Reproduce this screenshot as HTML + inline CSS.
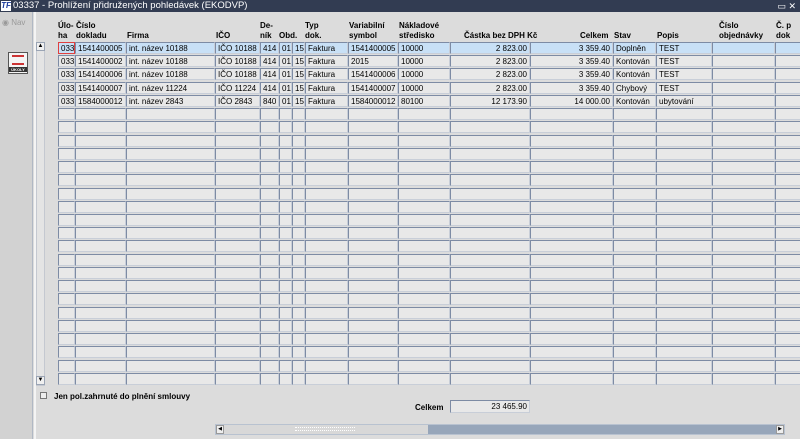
<!DOCTYPE html>
<html><head><meta charset="utf-8"><style>
*{margin:0;padding:0;box-sizing:border-box}
body{width:800px;height:439px;overflow:hidden;background:#dcdcdc;font-family:"Liberation Sans",Arial,sans-serif;font-size:8px;color:#000;position:relative}
.t{position:absolute;left:0;top:0;width:800px;height:12px;background:#323c52;color:#fff;font-size:9.5px;line-height:12px;padding-left:13px}
.t .ic{position:absolute;left:1px;top:1px;width:10px;height:10px;background:#fff;color:#1a3a9a;font-size:8px;font-weight:bold;line-height:10px;text-align:center;font-style:italic}
.lp{position:absolute;left:0;top:12px;width:33px;height:427px;background:#d2d2d2;border-right:1px solid #b0b8c4}
.wl{position:absolute;left:34px;top:12px;width:2px;height:427px;background:#f4f4f4}
.h{position:absolute;font-weight:bold;font-size:8px;line-height:10px;top:21px}
.c{position:absolute;height:12px;background:#e8e8e8;border:1px solid #7d8ba4;border-right-color:#c8ced8;border-bottom-color:#c8ced8;font-size:8px;line-height:11px;padding:0 2px;white-space:nowrap;overflow:hidden}
.s{background:#c8e0f6}
.r{text-align:right}
</style></head><body>
<div class="t"><div class="ic">TF</div>03337 - Prohlížení přidružených pohledávek (EKODVP)<span style="position:absolute;right:4px;top:0;font-size:9px">▭ ✕</span></div>
<div class="lp"><div style="position:absolute;left:2px;top:6px;color:#999;font-size:8px">◉ Nav</div>
<div style="position:absolute;left:8px;top:40px;width:20px;height:22px;background:#f4f4f4;border:1px solid #555"><div style="margin:2px 3px;height:10px;border-top:2px solid #c33;border-bottom:2px solid #c33"></div><div style="font-size:4px;font-weight:bold;text-align:center;background:#333;color:#fff">ÚKOLY</div></div></div>
<div class="wl"></div>
<div style="position:absolute;left:36px;top:42px;width:9px;height:344px;background:#e4e4e4;border:1px solid #c4c8d0"></div>
<div style="position:absolute;left:36px;top:42px;width:9px;height:9px;border:1px solid #9aa4b4;background:#f0f0f0;font-size:6px;text-align:center;line-height:7px">▲</div>
<div style="position:absolute;left:36px;top:376px;width:9px;height:9px;border:1px solid #9aa4b4;background:#f0f0f0;font-size:6px;text-align:center;line-height:7px">▼</div>
<div class="h" style="left:58px">Úlo-<br>ha</div><div class="h" style="left:76px">Číslo<br>dokladu</div>
<div class="h" style="left:127px;top:31px">Firma</div><div class="h" style="left:216px;top:31px">IČO</div>
<div class="h" style="left:260px">De-<br>ník</div><div class="h" style="left:279px;top:31px">Obd.</div>
<div class="h" style="left:305px">Typ<br>dok.</div><div class="h" style="left:349px">Variabilní<br>symbol</div>
<div class="h" style="left:399px">Nákladové<br>středisko</div><div class="h" style="left:464px;top:31px">Částka bez DPH Kč</div>
<div class="h" style="left:580px;top:31px">Celkem</div><div class="h" style="left:614px;top:31px">Stav</div>
<div class="h" style="left:657px;top:31px">Popis</div><div class="h" style="left:719px">Číslo<br>objednávky</div>
<div class="h" style="left:776px">Č. p<br>dok</div>
<div id="g"></div>
<div style="position:absolute;left:40px;top:392px;width:7px;height:7px;border:1px solid #777;background:#eee"></div>
<div style="position:absolute;left:54px;top:392px;font-weight:bold">Jen pol.zahrnuté do plnění smlouvy</div>
<div style="position:absolute;left:415px;top:403px;font-weight:bold">Celkem</div>
<div class="c r" style="left:450px;top:400px;width:80px;height:13px;line-height:12px">23 465.90</div>
<div style="position:absolute;left:215px;top:424px;width:570px;height:11px;background:#97a6ba;border:1px solid #b8c2d0"></div>
<div style="position:absolute;left:216px;top:425px;width:212px;height:9px;background:#d8d8d8"></div>
<div style="position:absolute;left:216px;top:425px;width:8px;height:9px;background:#eee;border:1px solid #999;font-size:5px;line-height:7px;text-align:center">◀</div>
<div style="position:absolute;left:776px;top:425px;width:8px;height:9px;background:#eee;border:1px solid #999;font-size:5px;line-height:7px;text-align:center">▶</div>
<div style="position:absolute;left:295px;top:427px;width:60px;height:4px;border-top:1px dotted #fff;border-bottom:1px dotted #fff"></div>
<script>
var cols=[[58,17],[75,51],[126,89],[215,45],[260,19],[279,13],[292,13],[305,43],[348,50],[398,52],[450,80],[530,83],[613,43],[656,56],[712,63],[775,40]];
var right={0:0,4:1,10:1,11:1};
var data=[
["033","1541400005","int. název 10188","IČO 10188","414","01","15","Faktura","1541400005","10000","2 823.00","3 359.40","Doplněn","TEST","",""],
["033","1541400002","int. název 10188","IČO 10188","414","01","15","Faktura","2015","10000","2 823.00","3 359.40","Kontován","TEST","",""],
["033","1541400006","int. název 10188","IČO 10188","414","01","15","Faktura","1541400006","10000","2 823.00","3 359.40","Kontován","TEST","",""],
["033","1541400007","int. název 11224","IČO 11224","414","01","15","Faktura","1541400007","10000","2 823.00","3 359.40","Chybový","TEST","",""],
["033","1584000012","int. název 2843","IČO 2843","840","01","15","Faktura","1584000012","80100","12 173.90","14 000.00","Kontován","ubytování","",""]];
var h="";
for(var r=0;r<26;r++){var y=42+Math.round(r*13.23);
for(var c=0;c<cols.length;c++){var t=data[r]?data[r][c]:"";
var cls="c"+(right[c]?" r":"")+(r==0?" s":"");
var st="left:"+cols[c][0]+"px;top:"+y+"px;width:"+cols[c][1]+"px;";
if(r==0&&c==0)st+="border:1px solid #e04040;";
h+='<div class="'+cls+'" style="'+st+'">'+t+'</div>';}}
document.getElementById("g").innerHTML=h;
</script>
</body></html>
